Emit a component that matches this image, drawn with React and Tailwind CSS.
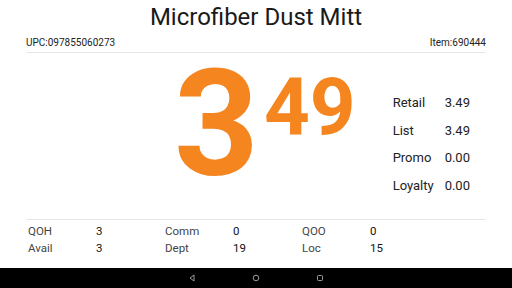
import React from 'react';

const prices = [
    { label: 'Retail', val: '3.49' },
    { label: 'List', val: '3.49' },
    { label: 'Promo', val: '0.00' },
    { label: 'Loyalty', val: '0.00' },
];

const stock = [
    [
        { label: 'QOH', val: '3' },
        { label: 'Avail', val: '3' },
    ],
    [
        { label: 'Comm', val: '0' },
        { label: 'Dept', val: '19' },
    ],
    [
        { label: 'QOO', val: '0' },
        { label: 'Loc', val: '15' },
    ],
];

const App = () => {
    return (
        <div className="w-[512px] h-[288px] bg-white flex flex-col overflow-hidden font-['Roboto',sans-serif]">
            {/* Header */}
            <div className="px-[26px]">
                <h1 className="text-center text-[24px] leading-[32px] text-[#1a1a1a] pt-[1px]">Microfiber Dust Mitt</h1>
                <div className="flex justify-between text-[10px] leading-[14px] text-[#222] mt-[3px] pb-[2px] border-b border-[#e6e6e6]">
                    <span>UPC:097855060273</span>
                    <span>Item:690444</span>
                </div>
            </div>

            {/* Price area */}
            <div className="flex-1 flex items-start px-[26px]">
                <div className="flex items-start ml-[148px] mt-[-2px]">
                    <span className="text-[148px] leading-[148px] font-bold text-[#f4851f]">3</span>
                    <span className="text-[80px] leading-[80px] font-bold text-[#f4851f] ml-[5px] mt-[16px]">49</span>
                </div>
                <div className="ml-auto mr-[16px] mt-[42px] flex flex-col gap-[11px]">
                    {prices.map((p, i) => (
                        <div key={i} className="flex text-[13px] leading-[16.5px] text-[#222]">
                            <span className="w-[52px]">{p.label}</span>
                            <span>{p.val}</span>
                        </div>
                    ))}
                </div>
            </div>

            {/* Stock info */}
            <div className="mx-[26px] border-t border-[#e6e6e6] pt-[3px] pb-[11px] flex">
                {stock.map((col, i) => (
                    <div key={i} className="w-[137px] flex flex-col">
                        {col.map((s, j) => (
                            <div key={j} className="flex text-[11.5px] leading-[17px] pl-[2px]">
                                <span className="w-[68px] text-[#444]">{s.label}</span>
                                <span className="text-[#111]">{s.val}</span>
                            </div>
                        ))}
                    </div>
                ))}
            </div>

            {/* Nav bar */}
            <div className="h-[20px] bg-black flex items-center justify-center gap-[54px] shrink-0">
                <svg width="10" height="10" viewBox="0 0 10 10">
                    <path d="M7 2 L3 5 L7 8 Z" fill="none" stroke="#9a9a9a" strokeWidth="1" strokeLinejoin="round" />
                </svg>
                <svg width="10" height="10" viewBox="0 0 10 10">
                    <circle cx="5" cy="5" r="2.8" fill="none" stroke="#9a9a9a" strokeWidth="1" />
                </svg>
                <svg width="10" height="10" viewBox="0 0 10 10">
                    <rect x="2.5" y="2.5" width="5" height="5" rx="0.8" fill="none" stroke="#9a9a9a" strokeWidth="1" />
                </svg>
            </div>
        </div>
    );
};

export default App;
